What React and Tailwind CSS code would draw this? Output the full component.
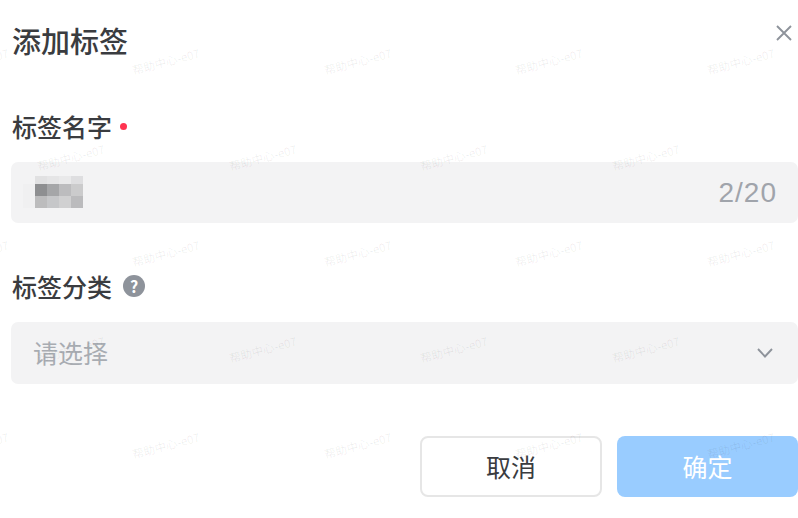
import React from "react";

const FONT = { fontFamily: '"Noto Sans CJK SC", "Noto Sans", sans-serif' };

const MOSAIC = [
  ["#ffffff00", "#e1e1e2", "#e5e5e6", "#e9e9ea", "#dedee0"],
  ["#f0f0f1", "#8e8f91", "#a5a6a8", "#bcbcbe", "#cbcbcc"],
  ["#f0f0f1", "#bcbcbd", "#c6c7c9", "#d0d0d1", "#bbbbbd"],
];

const MARKS = [];
for (let r = 0; r < 5; r++) {
  for (let c = 0; c < 5; c++) {
    const odd = r % 2 === 1;
    MARKS.push({
      x: (odd ? 71 : -25.5) + c * 191.5,
      y: 62 + r * 96,
    });
  }
}

function Watermarks() {
  return (
    <div className="absolute inset-0 pointer-events-none overflow-hidden">
      {MARKS.map((m, i) => (
        <span
          key={i}
          className="absolute text-[11.5px] leading-none whitespace-nowrap text-[#000000]/[0.07] -rotate-[15deg] -translate-x-1/2 -translate-y-1/2"
          style={{ left: m.x, top: m.y }}
        >
          帮助中心-e07
        </span>
      ))}
    </div>
  );
}

export default function App() {
  return (
    <div
      className="relative w-[798px] h-[518px] overflow-hidden bg-white pl-[11px] flex flex-col"
      style={FONT}
    >
      <div className="flex items-center justify-between h-[84px] shrink-0 pb-[4px]">
        <h1 className="ml-[1px] text-[29px] leading-[40px] font-medium text-[#3a3c40]">添加标签</h1>
        <svg viewBox="0 0 16 16" className="w-[16px] h-[16px] mr-[6px] mb-[14px] text-[#8e939b]" fill="none" stroke="currentColor" strokeWidth="1.9">
          <path d="M1 1 L15 15 M15 1 L1 15" />
        </svg>
      </div>

      <div className="flex items-center h-[36px] mt-[24px] gap-[8px] ml-[1px]">
        <span className="text-[25px] leading-[36px] font-medium text-[#3a3c40]">标签名字</span>
        <span className="w-[7px] h-[7px] rounded-full bg-[#ff3350]" />
      </div>

      <div className="mt-[18px] h-[61px] rounded-[7px] bg-[#f3f3f4] flex items-center justify-between pl-[12px] pr-[21px]">
        <div className="grid grid-cols-[12px_12px_12px_12px_12px] grid-rows-[8px_12px_12px] mb-[2px]">
          {MOSAIC.flat().map((c, i) => (
            <div key={i} style={{ backgroundColor: c }} />
          ))}
        </div>
        <span
          className="text-[28px] leading-[36px] tracking-[1px] text-[#a0a4ab]"
          style={{ fontFamily: '"Liberation Sans", Arial, sans-serif' }}
        >
          2/20
        </span>
      </div>

      <div className="flex items-center h-[36px] mt-[45px] gap-[11px] ml-[1px]">
        <span className="text-[25px] leading-[36px] font-medium text-[#3a3c40]">标签分类</span>
        <span className="w-[22px] h-[22px] rounded-full bg-[#8e939b] text-white text-[16px] leading-none font-bold flex items-center justify-center">?</span>
      </div>

      <div className="mt-[18px] h-[62px] rounded-[7px] bg-[#f3f3f4] flex items-center justify-between pl-[22px] pr-[25px]">
        <span className="text-[25px] leading-[36px] text-[#a8acb2] mb-[2px]">请选择</span>
        <svg viewBox="0 0 16 10" className="w-[16px] h-[10px] text-[#8e939b]" fill="none" stroke="currentColor" strokeWidth="1.9">
          <path d="M1 1 L8 8.5 L15 1" />
        </svg>
      </div>

      <div className="mt-[52px] flex justify-end gap-[15px]">
        <button className="w-[182px] h-[61px] rounded-[8px] border-2 border-[#e6e6e6] bg-white text-[25px] text-[#3a3c40]">取消</button>
        <button className="w-[181px] h-[61px] rounded-[8px] bg-[#99ccff] text-[25px] text-white">确定</button>
      </div>

      <Watermarks />
    </div>
  );
}
